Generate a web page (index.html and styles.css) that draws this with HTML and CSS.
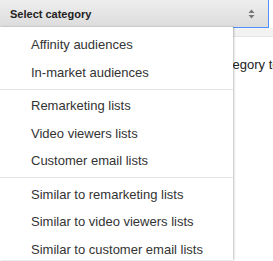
FILE: index.html
```html
<!DOCTYPE html>
<html lang="en">
<head>
  <meta charset="UTF-8">
  <title>Select category</title>
  <link rel="stylesheet" href="styles.css">
</head>
<body>
  <div class="picker">
    <div class="select">
      <span class="select-label">Select category</span>
      <svg class="arrows" width="7" height="10" viewBox="0 0 7 10">
        <path d="M3.5 0.5 L6.5 4 L0.5 4 Z" fill="#777"/>
        <path d="M3.5 9.5 L6.5 6 L0.5 6 Z" fill="#777"/>
      </svg>
    </div>

    <div class="band"></div>
    <p class="hint">Choose a category to add</p>

    <ul class="menu">
      <li>Affinity audiences</li>
      <li>In-market audiences</li>
      <li class="sep"></li>
      <li>Remarketing lists</li>
      <li>Video viewers lists</li>
      <li>Customer email lists</li>
      <li class="sep"></li>
      <li>Similar to remarketing lists</li>
      <li>Similar to video viewers lists</li>
      <li>Similar to customer email lists</li>
    </ul>
  </div>
</body>
</html>
```

FILE: styles.css
```css
* {
  box-sizing: border-box;
}
html, body {
  height: 100%;
}
body {
  margin: 0;
  font-family: "Liberation Sans", Arial, sans-serif;
  background: #fff;
  color: #222;
  overflow: hidden;
}
.picker {
  position: relative;
  height: 100%;
}
.select {
  display: flex;
  align-items: center;
  justify-content: space-between;
  width: 270px;
  height: 29px;
  margin: -1px 0 0 -1px;
  padding: 0 13px 0 10px;
  border: 1px solid #4d90fe;
  background: linear-gradient(#eeeeee, #dcdcdc);
}
.select-label {
  font-size: 11px;
  font-weight: bold;
  color: #222;
}
.arrows {
  display: block;
}
.band {
  height: 9px;
  background: #f2f2f2;
  border-bottom: 1px solid #e6e6e6;
}
.hint {
  margin: 0;
  padding: 20px 0 0 156px;
  font-size: 13px;
  white-space: nowrap;
  overflow: hidden;
  color: #222;
}
.menu {
  position: absolute;
  top: 28px;
  left: 0;
  bottom: 0;
  width: 233px;
  margin: 0;
  padding: 4px 0 0;
  list-style: none;
  background: #fff;
  box-shadow: 1px 0 2px rgba(0, 0, 0, 0.25);
}
.menu li {
  height: 27.5px;
  line-height: 27.5px;
  padding-left: 31px;
  font-size: 13px;
  color: #333;
  white-space: nowrap;
}
.menu li.sep {
  height: 1px;
  margin: 2.5px 0;
  padding: 0;
  background: #e5e5e5;
}
```
